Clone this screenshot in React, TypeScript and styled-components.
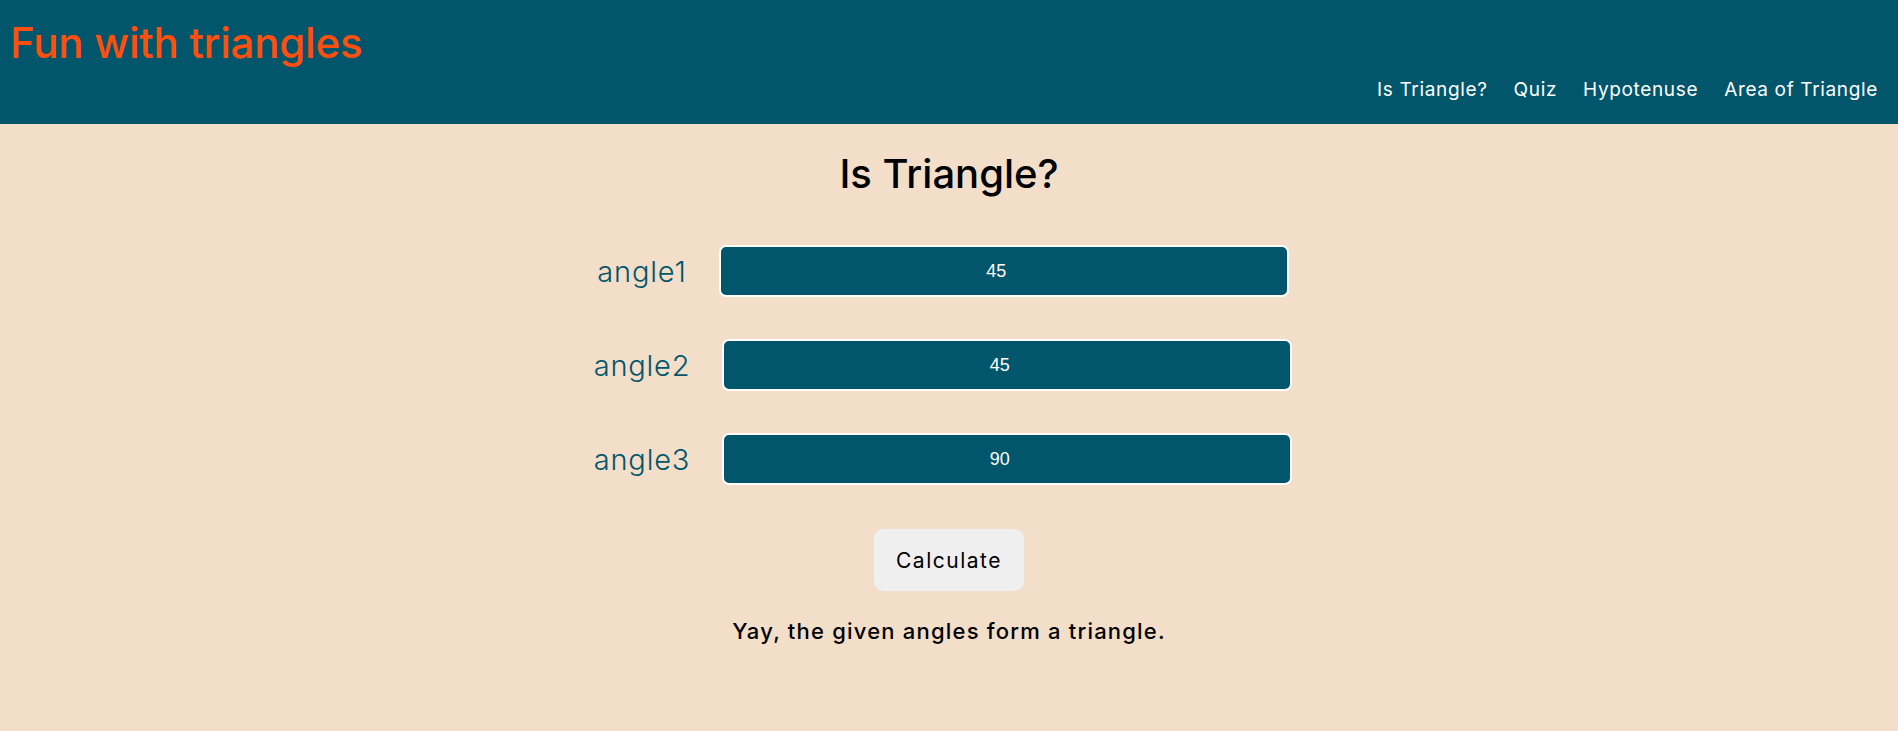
import React, { useState } from "react";
import styled, { createGlobalStyle } from "styled-components";

const GlobalStyle = createGlobalStyle`
  * { box-sizing: border-box; }
  html, body { margin: 0; padding: 0; }
  body {
    background: #f2dec9;
    font-family: Inter, "Noto Sans", sans-serif;
  }
`;

const Header = styled.header`
  height: 124px;
  background: #01566b;
  display: flex;
  flex-direction: column;
  padding: 18px 20px 0 10px;
`;

const Brand = styled.h1`
  margin: 0;
  font-size: 42px;
  line-height: 50px;
  font-weight: 500;
  color: #ff4f0f;
  letter-spacing: -0.2px;
`;

const Nav = styled.nav`
  margin-top: 11px;
  display: flex;
  justify-content: flex-end;
  gap: 26px;
`;

const NavLink = styled.a`
  color: #ffffff;
  text-decoration: none;
  font-size: 19px;
  line-height: 22px;
  font-weight: 400;
  letter-spacing: 0.65px;
`;

const Main = styled.main`
  display: flex;
  flex-direction: column;
  align-items: center;
  padding-top: 26px;
`;

const Title = styled.h2`
  margin: 0 0 47px;
  font-size: 40px;
  line-height: 48px;
  font-weight: 500;
  color: #000;
`;

const Row = styled.div`
  display: flex;
  align-items: center;
  gap: 32px;
  padding-right: 12px;
  margin-bottom: 42px;
`;

const Label = styled.label`
  font-size: 29px;
  font-weight: 300;
  color: #01566b;
  letter-spacing: 0.8px;
`;

const Input = styled.input`
  width: 570px;
  height: 52px;
  background: #01566b;
  border: 2px solid #ffffff;
  border-radius: 7px;
  color: #ffffff;
  text-align: center;
  font-family: "Liberation Sans", Arial, sans-serif;
  font-size: 18px;
  outline: none;
`;

const Button = styled.button`
  margin-top: 2px;
  height: 62px;
  padding: 0 21px;
  min-width: 150px;
  background: #efefef;
  border: none;
  border-radius: 9px;
  font-family: Inter, "Noto Sans", sans-serif;
  font-size: 21px;
  font-weight: 400;
  letter-spacing: 1.5px;
  color: #000;
  cursor: pointer;
`;

const Result = styled.p`
  margin: 27px 0 0;
  font-size: 22px;
  line-height: 26px;
  font-weight: 500;
  letter-spacing: 1.2px;
  color: #000;
`;

export default function App() {
  const [angles, setAngles] = useState(["45", "45", "90"]);
  const labels = ["angle1", "angle2", "angle3"];
  return (
    <>
      <GlobalStyle />
      <Header>
        <Brand>Fun with triangles</Brand>
        <Nav>
          <NavLink href="#">Is Triangle?</NavLink>
          <NavLink href="#">Quiz</NavLink>
          <NavLink href="#">Hypotenuse</NavLink>
          <NavLink href="#">Area of Triangle</NavLink>
        </Nav>
      </Header>
      <Main>
        <Title>Is Triangle?</Title>
        {labels.map((l, i) => (
          <Row key={l}>
            <Label htmlFor={l}>{l}</Label>
            <Input
              id={l}
              type="number"
              value={angles[i]}
              onChange={(e) => {
                const next = [...angles];
                next[i] = e.target.value;
                setAngles(next);
              }}
            />
          </Row>
        ))}
        <Button>Calculate</Button>
        <Result>Yay, the given angles form a triangle.</Result>
      </Main>
    </>
  );
}
